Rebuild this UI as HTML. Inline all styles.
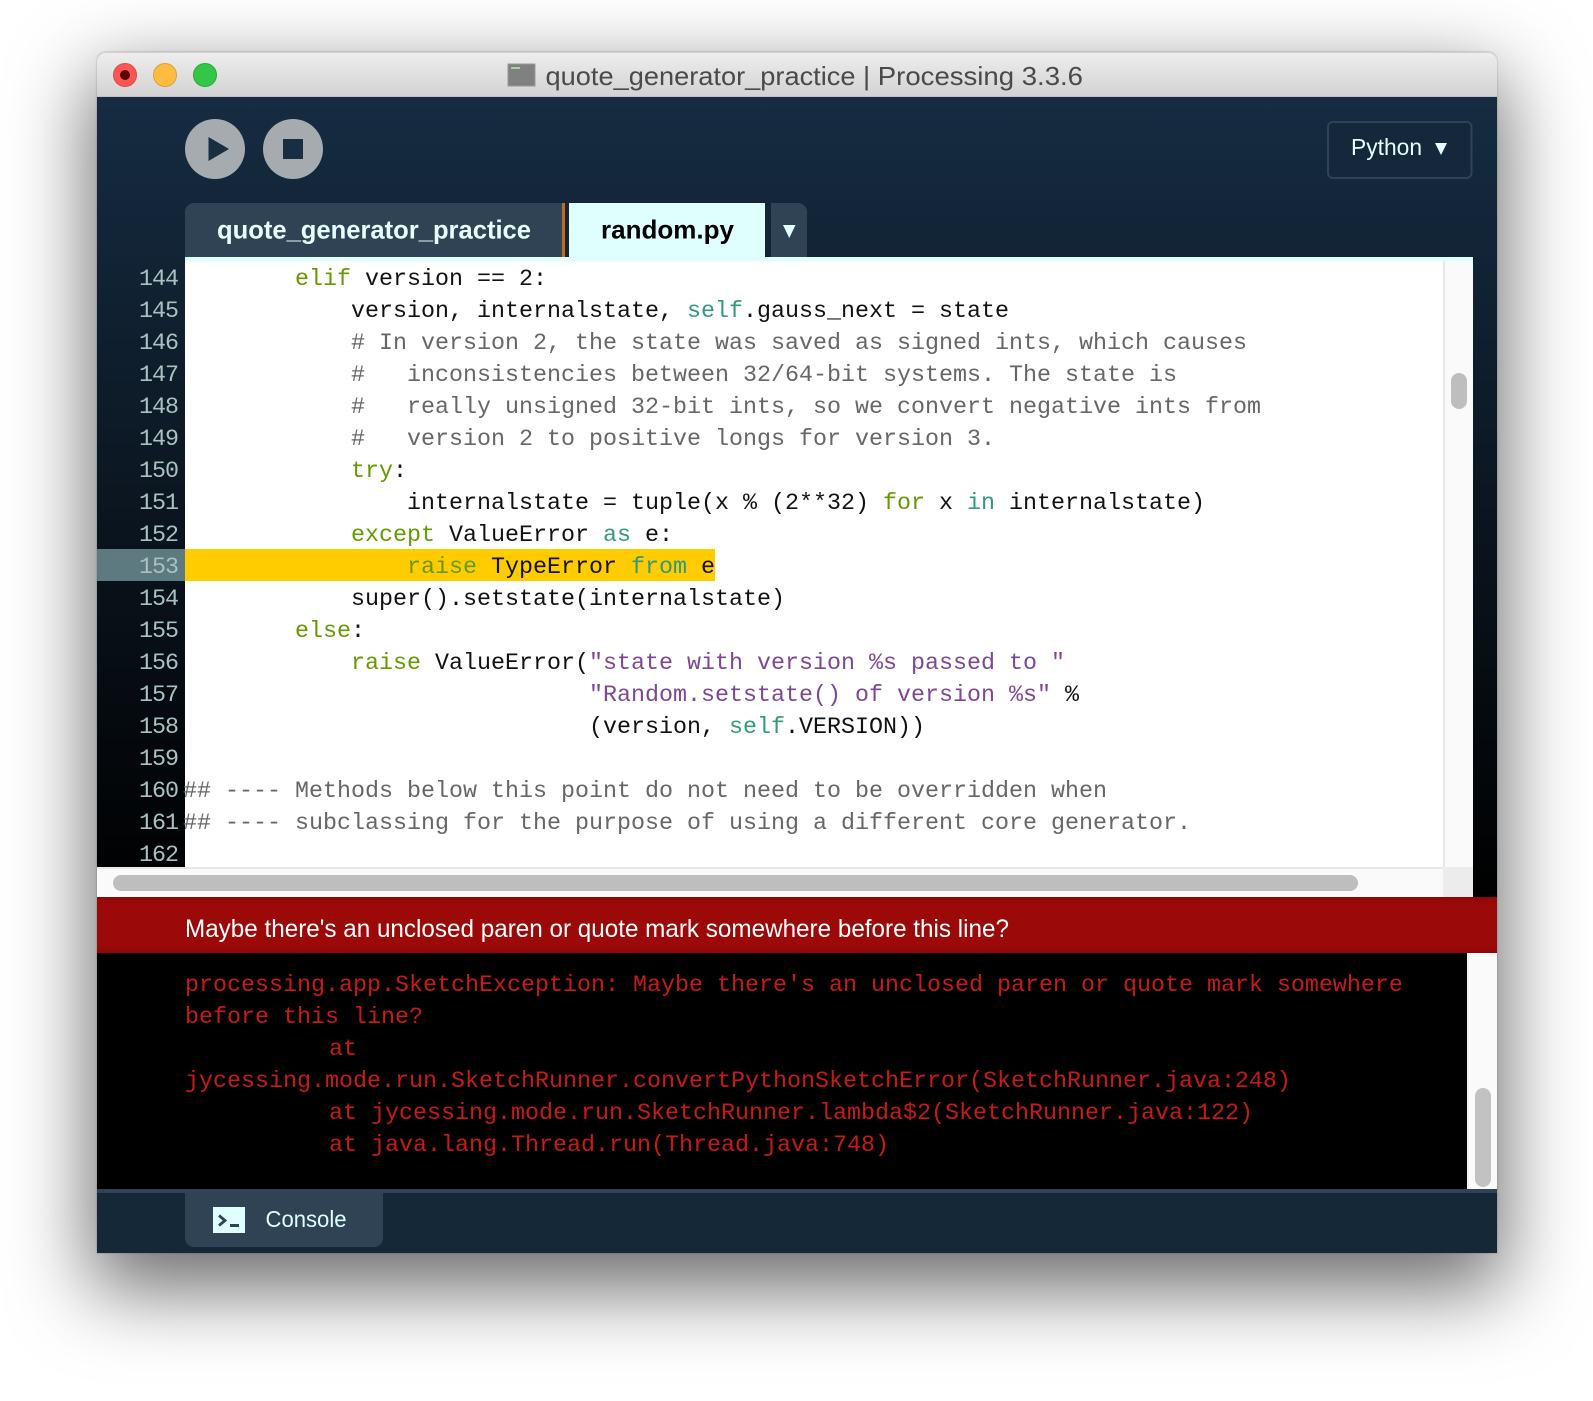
<!DOCTYPE html>
<html><head><meta charset="utf-8"><style>
html,body{margin:0;padding:0;background:#fff;width:1593px;height:1401px;overflow:hidden}
#win{position:absolute;left:97px;top:52px;width:1400px;height:1201px;border-radius:9px 9px 0 0;box-shadow:0 30px 80px 6px rgba(0,0,0,.58),0 0 1px 1px rgba(0,0,0,.1)}
.a{position:absolute}
pre{position:absolute;margin:0;font-family:"Liberation Mono",monospace;font-size:23.33px;line-height:32px;white-space:pre}
#code{left:183px;top:264px;color:#111}
#nums{left:97px;width:81px;top:264px;text-align:right;color:#a8c2c2;letter-spacing:-1px}
#con{left:185px;top:970px;color:#c81a1a}
.k{color:#669900}.t{color:#33997e}.c{color:#666}.s{color:#7d4793}
.at{margin-left:4px}
svg{position:absolute;left:0;top:0}
</style></head><body>
<div id="win"></div>
<div class="a" style="left:97px;top:52px;width:1400px;height:45px;background:linear-gradient(#eeeeee,#d2d2d2);border-radius:9px 9px 0 0;box-shadow:inset 0 1px 0 #d0d0d0,inset 0 -1px 0 #c4c4c4"></div>
<div class="a" style="left:97px;top:97px;width:1400px;height:800px;background:linear-gradient(#162c42,#000)"></div>
<div class="a" style="left:185px;top:257px;width:1288px;height:4px;background:#dfffff"></div>
<div class="a" style="left:185px;top:261px;width:1258px;height:606px;background:#fff"></div>
<div class="a" style="left:1443px;top:261px;width:30px;height:606px;background:#fafafa;border-left:2px solid #e8e8e8;box-sizing:border-box"></div>
<div class="a" style="left:1451px;top:373px;width:16px;height:36px;border-radius:8px;background:#bebebe"></div>
<div class="a" style="left:97px;top:549px;width:88px;height:32px;background:#5c7a80"></div>
<div class="a" style="left:185px;top:549px;width:530px;height:32px;background:#ffcc00"></div>
<div class="a" style="left:97px;top:867px;width:1346px;height:30px;background:#fafafa;border-top:2px solid #e8e8e8;box-sizing:border-box"></div>
<div class="a" style="left:1443px;top:867px;width:30px;height:30px;background:#ececec"></div>
<div class="a" style="left:113px;top:875px;width:1245px;height:16px;border-radius:8px;background:#bebebe"></div>
<div class="a" style="left:97px;top:897px;width:1400px;height:56px;background:linear-gradient(#8c0707,#9b0909 12%,#9b0909 88%,#8c0707)"></div>
<div class="a" style="left:97px;top:953px;width:1370px;height:236px;background:#000"></div>
<div class="a" style="left:1467px;top:953px;width:30px;height:236px;background:#fafafa;box-shadow:inset 2px 0 0 #f0f0f0"></div>
<div class="a" style="left:1475px;top:1088px;width:16px;height:99px;border-radius:8px;background:#c2c2c2"></div>
<div class="a" style="left:97px;top:1189px;width:1400px;height:64px;background:#152838;border-top:4px solid #2f4354;box-sizing:border-box"></div>
<div class="a" style="left:185px;top:1193px;width:198px;height:54px;background:#2f4354;border-radius:0 0 9px 9px"></div>

<pre id="nums">144
145
146
147
148
149
150
151
152
153
154
155
156
157
158
159
160
161
162</pre>
<pre id="code">        <span class="k">elif</span> version == 2:
            version, internalstate, <span class="t">self</span>.gauss_next = state
            <span class="c"># In version 2, the state was saved as signed ints, which causes</span>
            <span class="c">#   inconsistencies between 32/64-bit systems. The state is</span>
            <span class="c">#   really unsigned 32-bit ints, so we convert negative ints from</span>
            <span class="c">#   version 2 to positive longs for version 3.</span>
            <span class="k">try</span>:
                internalstate = tuple(x % (2**32) <span class="k">for</span> x <span class="t">in</span> internalstate)
            <span class="k">except</span> ValueError <span class="t">as</span> e:
                <span class="k">raise</span> TypeError <span class="t">from</span> e
            super().setstate(internalstate)
        <span class="k">else</span>:
            <span class="k">raise</span> ValueError(<span class="s">"state with version %s passed to "</span>
                             <span class="s">"Random.setstate() of version %s"</span> %
                             (version, <span class="t">self</span>.VERSION))

<span class="c">## ---- Methods below this point do not need to be overridden when</span>
<span class="c">## ---- subclassing for the purpose of using a different core generator.</span></pre>
<pre id="con">processing.app.SketchException: Maybe there's an unclosed paren or quote mark somewhere
before this line?
          <span class="at">at</span>
jycessing.mode.run.SketchRunner.convertPythonSketchError(SketchRunner.java:248)
          <span class="at">at jycessing.mode.run.SketchRunner.lambda$2(SketchRunner.java:122)</span>
          <span class="at">at java.lang.Thread.run(Thread.java:748)</span></pre>

<svg width="1593" height="1401" viewBox="0 0 1593 1401" font-family="'Liberation Sans',sans-serif">
<circle cx="125" cy="75" r="11.5" fill="#fc5753" stroke="#df4744"/><circle cx="125" cy="75" r="5" fill="#5a0505"/>
<circle cx="165" cy="75" r="11.5" fill="#fdbc40" stroke="#de9f34"/>
<circle cx="205" cy="75" r="11.5" fill="#33c748" stroke="#27aa35"/>
<rect x="508" y="64" width="27" height="22" fill="#808080" stroke="#999" stroke-width="1"/>
<rect x="511" y="67" width="9" height="2" fill="#9fd6a8"/>
<text x="545.500" y="85" font-size="26" fill="#4a4a4a" textLength="310" lengthAdjust="spacingAndGlyphs">quote_generator_practice</text>
<text x="863" y="85" font-size="26" fill="#4a4a4a" textLength="220" lengthAdjust="spacingAndGlyphs">| Processing 3.3.6</text>

<circle cx="215" cy="149" r="30" fill="#a6abb0"/><circle cx="293" cy="149" r="30" fill="#a6abb0"/>
<polygon points="208.500,137 229,149 208.500,161" fill="#1a2e42"/>
<rect x="283" y="139" width="20" height="20" fill="#1a2e42"/>

<rect x="1328" y="122" width="143.500" height="56" rx="5" fill="#15273a" stroke="#2f4354" stroke-width="2"/>
<text x="1351" y="155" font-size="23" fill="#e4ffff" textLength="71" lengthAdjust="spacingAndGlyphs">Python</text>
<polygon points="1435,143 1447,143 1441,155" fill="#e4ffff"/>

<path d="M185 257V212a9 9 0 0 1 9-9H562V257Z" fill="#2f4354"/>
<rect x="562" y="203" width="3" height="54" fill="#c96a12"/>
<rect x="569" y="203" width="196" height="54" fill="#dfffff"/>
<path d="M771 257V203H798a9 9 0 0 1 9 9V257Z" fill="#2f4354"/>
<polygon points="783,225 795.500,225 789.250,238" fill="#e4ffff"/>
<text x="217" y="238.500" font-size="26" font-weight="bold" fill="#e8ffff" textLength="314" lengthAdjust="spacingAndGlyphs">quote_generator_practice</text>
<text x="601" y="238.500" font-size="26" font-weight="bold" fill="#000" textLength="133" lengthAdjust="spacingAndGlyphs">random.py</text>

<text x="185" y="937" font-size="25" fill="#fff" textLength="824" lengthAdjust="spacingAndGlyphs">Maybe there's an unclosed paren or quote mark somewhere before this line?</text>

<rect x="213" y="1207" width="32" height="26" fill="#dfffff"/>
<path d="M219 1215.500L225 1220.500L219 1225.500" fill="none" stroke="#2f4354" stroke-width="2.800"/>
<rect x="230" y="1224" width="9" height="3" fill="#2f4354"/>
<text x="265.500" y="1227" font-size="23" fill="#dfffff" textLength="81" lengthAdjust="spacingAndGlyphs">Console</text>
</svg>
</body></html>
